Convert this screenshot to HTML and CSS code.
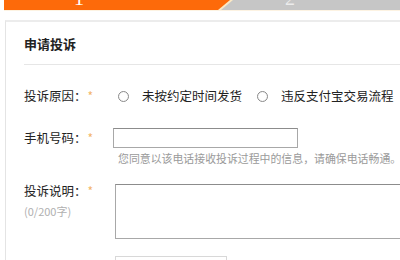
FILE: index.html
```html
<!DOCTYPE html>
<html lang="zh-CN">
<head>
  <meta charset="UTF-8" />
  <title>申请投诉</title>
  <link rel="stylesheet" href="styles.css">
</head>
<body>
  <div class="steps">
    <div class="step step-1"><span>1</span></div>
    <div class="step step-2"><span>2</span></div>
  </div>

  <div class="panel">
    <div class="panel-title">申请投诉</div>

    <div class="form">
      <div class="row">
        <div class="label">投诉原因：<span class="req">*</span></div>
        <div class="field radios">
          <label class="radio"><span class="dot"></span>未按约定时间发货</label>
          <label class="radio"><span class="dot"></span>违反支付宝交易流程</label>
        </div>
      </div>

      <div class="row row-phone">
        <div class="label">手机号码：<span class="req">*</span></div>
        <div class="field">
          <div class="input"></div>
          <div class="hint">您同意以该电话接收投诉过程中的信息，请确保电话畅通。</div>
        </div>
      </div>

      <div class="row row-desc">
        <div class="label">
          投诉说明：<span class="req">*</span>
          <div class="count">(0/200字)</div>
        </div>
        <div class="field field-grow">
          <div class="textarea"></div>
        </div>
      </div>

      <div class="row row-more">
        <div class="label"></div>
        <div class="field">
          <div class="input input-short"></div>
        </div>
      </div>
    </div>
  </div>
</body>
</html>
```

FILE: styles.css
```css
html {
  overflow: hidden;
}

body {
  margin: 0;
  background-color: #ffffff;
  font-family: "Noto Sans CJK SC", "Noto Sans", sans-serif;
  color: #333;
  overflow: hidden;
  width: 400px;
  height: 260px;
}

.steps {
  display: flex;
  height: 30px;
  margin-top: -20px;
  margin-left: 4px;
  background-color: #fbe8c4;
  border-bottom: 1px solid #fdf3e2;
}

.step {
  height: 30px;
  color: #fff;
  font-size: 20px;
  line-height: 36px;
  font-family: "Liberation Serif", serif;
}

.step-1 {
  width: 250px;
  flex: none;
  background-color: #fd6a0a;
  clip-path: polygon(0 0, 100% 0, calc(100% - 36px) 100%, 0 100%);
  padding-left: 70px;
  box-sizing: border-box;
}

.step-2 {
  flex: 1;
  margin-left: -33px;
  background-color: #c6c6c6;
  clip-path: polygon(36px 0, 100% 0, 100% 100%, 0 100%);
  padding-left: 64px;
  color: #ececec;
}

.panel {
  margin-top: 9px;
  margin-left: 5px;
  height: 240px;
  overflow: hidden;
  border-top: 2px solid #ececec;
  border-left: 1px solid #e4e4e4;
  padding-left: 18px;
}

.panel-title {
  font-size: 13px;
  font-weight: bold;
  line-height: 20px;
  padding-top: 12px;
  padding-bottom: 10px;
  border-bottom: 1px solid #e6e6e6;
  color: #222;
}

.row {
  display: flex;
  font-size: 12.5px;
  line-height: 20px;
  color: #222;
}

.row:first-child {
  margin-top: 21px;
}

.label {
  width: 89px;
  flex: none;
}

.req {
  color: #f3b56a;
  font-size: 12px;
  margin-left: 1px;
}

.radios {
  display: flex;
  align-items: center;
  padding-left: 5px;
  white-space: nowrap;
}

.radio {
  display: flex;
  align-items: center;
  margin-right: 15px;
}

.radio:last-child {
  margin-right: 0;
}

.dot {
  width: 9px;
  height: 9px;
  border: 1px solid #8a8a8a;
  border-radius: 50%;
  margin-right: 13px;
  background: radial-gradient(circle, #fff 50%, #f0f0f0 100%);
}

.row-phone {
  margin-top: 22px;
}

.input {
  width: 183px;
  height: 18px;
  border: 1px solid #a8a8a8;
  border-top-color: #8c8c8c;
}

.hint {
  margin-top: 3px;
  padding-left: 5px;
  font-size: 10.9px;
  line-height: 14px;
  color: #9a9a9a;
  white-space: nowrap;
}

.row-desc {
  margin-top: 16px;
}

.count {
  color: #b0b0b0;
  font-size: 11px;
  line-height: 20px;
}

.field-grow {
  flex: 1;
}

.textarea {
  margin-top: 3px;
  margin-left: 2px;
  height: 53px;
  border: 1px solid #a8a8a8;
  border-top-color: #8c8c8c;
  border-right: none;
}

.row-more {
  margin-top: 17px;
}

.input-short {
  margin-left: 2px;
  width: 110px;
  border-color: #d8d8d8;
}
```
